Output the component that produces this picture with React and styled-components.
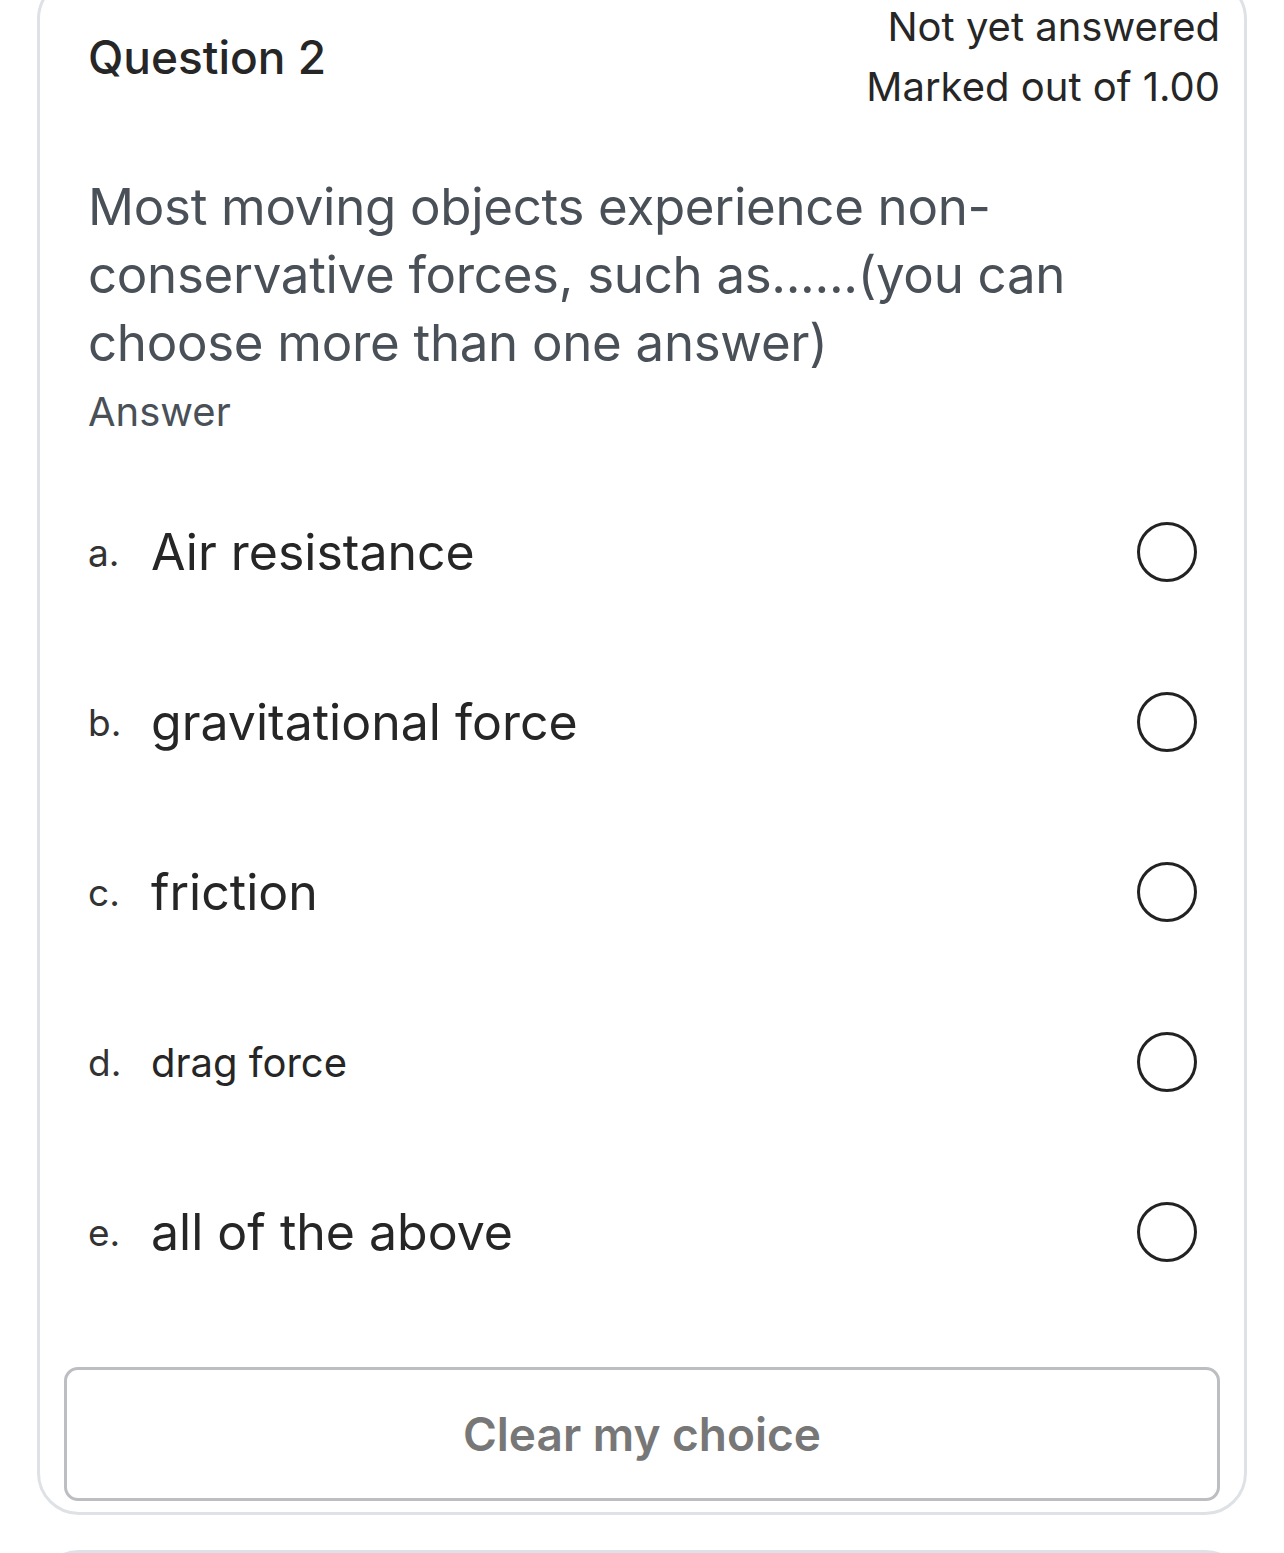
import React from 'react';
import styled, { createGlobalStyle } from 'styled-components';

const GlobalStyle = createGlobalStyle`
  html, body {
    margin: 0;
    padding: 0;
    background: #fff;
    font-family: Inter, "Noto Sans", "Liberation Sans", sans-serif;
    color: #222;
  }
`;

const Page = styled.div`
  padding: 0 37px;
  overflow: hidden;
`;

const Card = styled.div`
  margin-top: ${(p) => p.$offset || 0}px;
  border: 3px solid #dee2e6;
  border-radius: 42px;
  padding: 17px 24px 11px 24px;
  min-height: ${(p) => p.$minHeight || 0}px;
`;

const Header = styled.div`
  display: flex;
  justify-content: space-between;
  align-items: center;
  padding-left: 24px;
`;

const QNo = styled.h3`
  margin: 0;
  font-size: 46px;
  font-weight: 500;
  color: #262626;
`;

const Status = styled.div`
  text-align: right;
  font-size: 40px;
  line-height: 60px;
  color: #262626;
`;

const QText = styled.div`
  margin-top: 56px;
  padding-left: 24px;
  font-size: 51px;
  letter-spacing: -0.3px;
  line-height: 68px;
  color: #495057;
`;

const AnswerLabel = styled.div`
  padding-left: 24px;
  font-size: 40px;
  line-height: 60px;
  color: #495057;
  margin-top: 5px;
`;

const Options = styled.div`
  margin-top: 25px;
  padding: 0 23px 0 24px;
`;

const OptionRow = styled.label`
  display: flex;
  align-items: center;
  height: 170px;
`;

const Letter = styled.span`
  width: 63px;
  flex-shrink: 0;
  font-size: 37px;
  color: #333;
`;

const OptionText = styled.span`
  flex: 1;
  font-size: ${(p) => p.$size || 50}px;
  color: #262626;
`;

const Circle = styled.input`
  appearance: none;
  margin: 0;
  width: 60px;
  height: 60px;
  border: 3px solid #222;
  border-radius: 50%;
  background: #fff;
  flex-shrink: 0;
`;

const ClearButton = styled.button`
  display: block;
  width: 100%;
  height: 134px;
  margin-top: 50px;
  border: 3px solid #bcbec2;
  border-radius: 14px;
  background: #fff;
  font-family: inherit;
  font-size: 46px;
  font-weight: 600;
  color: #777;
`;

const options = [
  { letter: 'a.', text: 'Air resistance' },
  { letter: 'b.', text: 'gravitational force' },
  { letter: 'c.', text: 'friction' },
  { letter: 'd.', text: 'drag force', size: 40 },
  { letter: 'e.', text: 'all of the above' },
];

const App = () => {
  return (
    <Page>
      <GlobalStyle />
      <Card $offset={-23}>
        <Header>
          <QNo>Question 2</QNo>
          <Status>
            <div>Not yet answered</div>
            <div>Marked out of 1.00</div>
          </Status>
        </Header>
        <QText>
          Most moving objects experience non-conservative forces, such as......(you can choose more than one answer)
        </QText>
        <AnswerLabel>Answer</AnswerLabel>
        <Options>
          {options.map((o) => (
            <OptionRow key={o.letter}>
              <Letter>{o.letter}</Letter>
              <OptionText $size={o.size}>{o.text}</OptionText>
              <Circle type="checkbox" />
            </OptionRow>
          ))}
        </Options>
        <ClearButton>Clear my choice</ClearButton>
      </Card>
      <Card $offset={35} $minHeight={200} />
    </Page>
  );
};

export default App;
